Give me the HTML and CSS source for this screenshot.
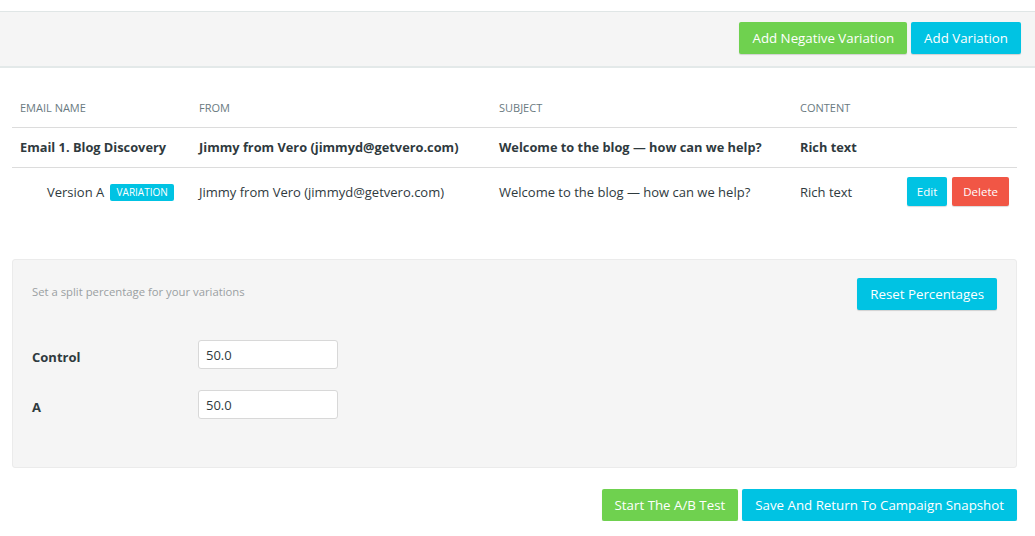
FILE: index.html
```html
<!DOCTYPE html>
<html>
<head>
<meta charset="utf-8">
<link rel="stylesheet" href="styles.css">
</head>
<body>
<div class="toolbar">
  <button class="btn btn-green">Add Negative Variation</button>
  <button class="btn btn-blue">Add Variation</button>
</div>
<div class="content">
  <table class="emails">
    <colgroup>
      <col class="c1"><col class="c2"><col class="c3"><col class="c4"><col>
    </colgroup>
    <thead>
      <tr><th>Email Name</th><th>From</th><th>Subject</th><th>Content</th><th></th></tr>
    </thead>
    <tbody>
      <tr class="main-row">
        <td>Email 1. Blog Discovery</td>
        <td>Jimmy from Vero (jimmyd@getvero.com)</td>
        <td>Welcome to the blog — how can we help?</td>
        <td>Rich text</td>
        <td></td>
      </tr>
      <tr class="var-row">
        <td class="indent">Version A <span class="badge">VARIATION</span></td>
        <td>Jimmy from Vero (jimmyd@getvero.com)</td>
        <td>Welcome to the blog — how can we help?</td>
        <td>Rich text</td>
        <td class="actions"><button class="btn btn-sm btn-blue">Edit</button><button class="btn btn-sm btn-red">Delete</button></td>
      </tr>
    </tbody>
  </table>

  <div class="panel">
    <div class="panel-head">
      <span class="hint">Set a split percentage for your variations</span>
      <button class="btn btn-blue">Reset Percentages</button>
    </div>
    <div class="split-rows">
      <div class="split-row"><label>Control</label><input class="pct" type="text" value="50.0"></div>
      <div class="split-row"><label>A</label><input class="pct" type="text" value="50.0"></div>
    </div>
  </div>

  <div class="footer">
    <button class="btn btn-green">Start The A/B Test</button>
    <button class="btn btn-blue">Save And Return To Campaign Snapshot</button>
  </div>
</div>
</body>
</html>
```

FILE: styles.css
```css
* { box-sizing: border-box; }
html, body { margin: 0; padding: 0; background: #fff; }
body {
  font-family: "Open Sans", "Liberation Sans", sans-serif;
  font-size: 13px;
  color: #2f3a3e;
}
.toolbar {
  margin-top: 11px;
  height: 57px;
  background: #f5f5f5;
  border-top: 1px solid #e0e6e6;
  border-bottom: 2px solid #e3e9e9;
  display: flex;
  justify-content: flex-end;
  align-items: center;
  gap: 4px;
  padding: 0 14px 2px 0;
}
.btn {
  font-family: inherit;
  font-size: 13.3px;
  color: #fff;
  border: 0;
  border-radius: 2px;
  height: 32px;
  padding: 0 13px;
  box-shadow: 0 1px 1px rgba(0,0,0,0.15);
  cursor: pointer;
  line-height: 32px;
}
.btn-green { background: #6fd14f; }
.btn-blue { background: #00c3e3; }
.btn-red { background: #f15645; }
.btn-sm { font-size: 11.5px; height: 29px; line-height: 29px; padding: 0 10px; }

.content { padding: 0 18px 0 12px; }

.emails {
  width: 100%;
  table-layout: fixed;
  border-collapse: collapse;
  margin-top: 20px;
}
.c1 { width: 179px; }
.c2 { width: 300px; }
.c3 { width: 301px; }
.c4 { width: 100px; }
.emails th {
  text-align: left;
  font-weight: 400;
  font-size: 11px;
  text-transform: uppercase;
  color: #6a7a7f;
  padding: 0 8px;
  height: 39px;
  border-bottom: 1px solid #dcdcdc;
}
.emails td {
  padding: 0 8px;
  white-space: nowrap;
}
.main-row td {
  font-weight: 700;
  font-size: 12.8px;
  height: 40px;
  border-bottom: 1px solid #dcdcdc;
}
.var-row td { height: 49px; }
.emails td.indent { padding-left: 35px; }
.badge {
  display: inline-block;
  background: #00c3e3;
  color: #fff;
  font-size: 10px;
  padding: 0 6px 0 7px;
  height: 17px;
  line-height: 17px;
  border-radius: 2px;
  vertical-align: 1px;
  margin-left: 2px;
}
.actions { text-align: right; }
.actions .btn { margin-left: 5px; }
.actions .btn-blue { padding: 0 10px; }
.actions .btn-red { padding: 0 11px; }

.panel {
  margin-top: 43px;
  background: #f5f5f5;
  border: 1px solid #ebebeb;
  border-radius: 3px;
  padding: 18px 19px 48px 19px;
}
.panel-head {
  display: flex;
  justify-content: space-between;
  align-items: center;
}
.hint { font-size: 11.3px; color: #9aa0a2; padding-bottom: 6px; }
.split-rows {
  margin-top: 30px;
  display: flex;
  flex-direction: column;
  gap: 21px;
}
.split-row { display: flex; align-items: center; }
.split-row label { width: 166px; font-weight: 700; padding-top: 4px; }
.pct {
  width: 140px;
  height: 29px;
  border: 1px solid #d8d8d8;
  border-radius: 3px;
  background: #fff;
  font-family: inherit;
  font-size: 13px;
  color: #2f3a3e;
  padding: 0 7px;
}
.footer {
  margin-top: 21px;
  display: flex;
  justify-content: flex-end;
  gap: 4px;
}
```
